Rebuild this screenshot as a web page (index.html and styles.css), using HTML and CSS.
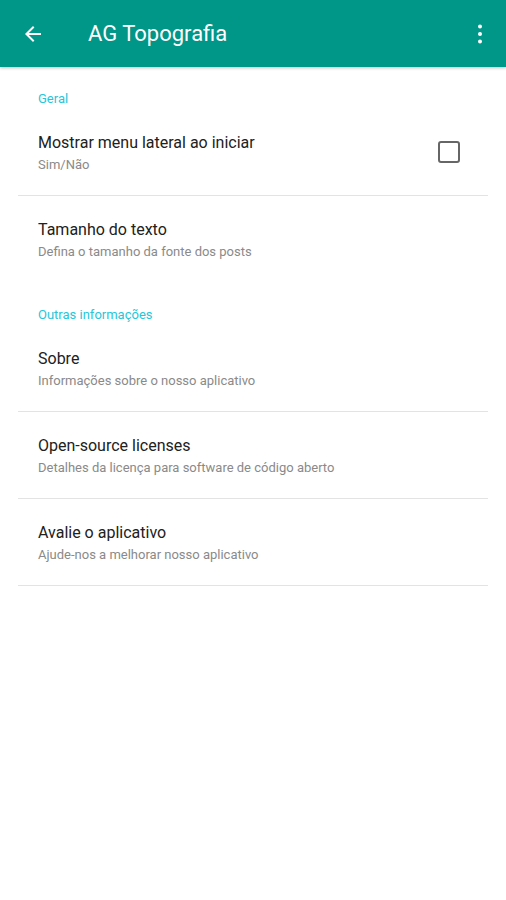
FILE: index.html
```html
<!DOCTYPE html>
<html lang="pt">

<head>
    <meta charset="UTF-8">
    <meta name="viewport" content="width=device-width, initial-scale=1.0">
    <title>AG Topografia</title>
    <link rel="stylesheet" href="styles.css">
</head>

<body>

    <div class="toolbar">
        <svg class="back" width="24" height="24" viewBox="0 0 24 24">
            <path d="M20 11H7.83l5.59-5.59L12 4l-8 8 8 8 1.41-1.41L7.83 13H20v-2z" fill="#fff"/>
        </svg>
        <span class="titulo">AG Topografia</span>
        <svg class="menu" width="24" height="24" viewBox="0 0 24 24">
            <circle cx="12" cy="4.5" r="2" fill="#fff"/>
            <circle cx="12" cy="12" r="2" fill="#fff"/>
            <circle cx="12" cy="19.5" r="2" fill="#fff"/>
        </svg>
    </div>

    <div class="lista">
        <div class="secao">Geral</div>

        <div class="item">
            <div class="textos">
                <div class="nome">Mostrar menu lateral ao iniciar</div>
                <div class="desc">Sim/Não</div>
            </div>
            <div class="checkbox"></div>
        </div>

        <div class="item sem-linha">
            <div class="textos">
                <div class="nome">Tamanho do texto</div>
                <div class="desc">Defina o tamanho da fonte dos posts</div>
            </div>
        </div>

        <div class="secao">Outras informações</div>

        <div class="item">
            <div class="textos">
                <div class="nome">Sobre</div>
                <div class="desc">Informações sobre o nosso aplicativo</div>
            </div>
        </div>

        <div class="item">
            <div class="textos">
                <div class="nome">Open-source licenses</div>
                <div class="desc">Detalhes da licença para software de código aberto</div>
            </div>
        </div>

        <div class="item">
            <div class="textos">
                <div class="nome">Avalie o aplicativo</div>
                <div class="desc">Ajude-nos a melhorar nosso aplicativo</div>
            </div>
        </div>
    </div>

</body>

</html>
```

FILE: styles.css
```css
body {
    margin: 0;
    font-family: Roboto, "Liberation Sans", sans-serif;
    background-color: #fff;
    color: #212121;
}

.toolbar {
    display: flex;
    align-items: center;
    height: 67px;
    padding: 0 14px 0 21px;
    background-color: #009688;
    box-shadow: 0 1px 3px rgba(0, 0, 0, 0.25);
}

.back {
    flex-shrink: 0;
}

.titulo {
    flex: 1;
    margin-left: 43px;
    font-size: 22px;
    color: #fff;
}

.menu {
    flex-shrink: 0;
}

.lista {
    padding: 0 18px;
}

.secao {
    padding: 24px 20px 3px 20px;
    font-size: 13px;
    color: #26c6da;
}

.item {
    display: flex;
    align-items: center;
    height: 86px;
    padding: 0 28px 0 20px;
    border-bottom: 1px solid #e3e3e3;
}

.item.sem-linha {
    height: 87px;
    border-bottom: none;
}

.textos {
    flex: 1;
}

.nome {
    font-size: 16px;
    color: #212121;
}

.desc {
    margin-top: 5px;
    font-size: 13px;
    color: #8a8a8a;
}

.checkbox {
    width: 18px;
    height: 18px;
    border: 2px solid #666;
    border-radius: 3px;
}
```
